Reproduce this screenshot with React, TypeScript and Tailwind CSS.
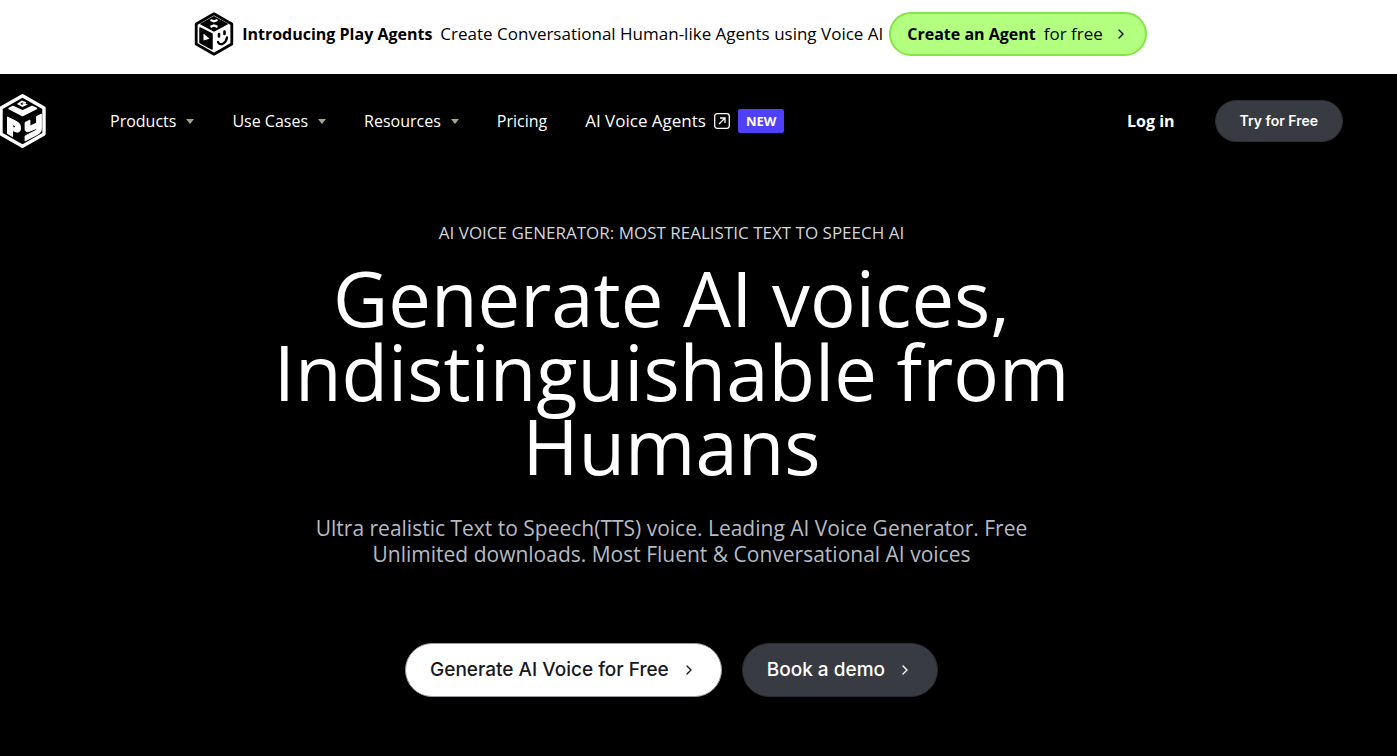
import React from "react";
import { ChevronRight } from "lucide-react";

const sans = "font-['Open_Sans','Noto_Sans',sans-serif]";

function AgentsLogo() {
  return (
    <svg viewBox="0 0 40 44" className="h-11 w-10 shrink-0" aria-hidden="true">
      <path d="M20 1.8 37.8 12v20L20 42.2 2.2 32V12Z" fill="#fff" stroke="#000" strokeWidth="2.8" strokeLinejoin="round" />
      <path d="M20 4.5 33.5 12 20 19.2 6.5 12Z" fill="#000" stroke="#000" strokeLinejoin="round" />
      <path d="M6 16 18 22V37L6 30.500Z" fill="#000" stroke="#000" strokeWidth="1.500" strokeLinejoin="round" />
      <path d="M9.500 21.500 15.500 26.800 9.500 28.500Z" fill="#fff" />
      <path d="M16.500 8 20 9.300 23.500 8M16.500 14.800 20 13.500 23.500 14.800" fill="none" stroke="#fff" strokeWidth="2.300" />
      <path d="M25 22v2.500M30.500 19.500v2.500" stroke="#000" strokeWidth="2.600" strokeLinecap="round" />
      <path d="M24 30c2 4.500 8 1.500 9-4.500" fill="none" stroke="#000" strokeWidth="2.300" strokeLinecap="round" />
    </svg>
  );
}

function PlayLogo() {
  return (
    <svg viewBox="0 0 46 54" className="h-[54px] w-[46px] shrink-0" aria-hidden="true">
      <path d="M22.5 1.8 44 14v26L22.5 52.2 1 40V14Z" fill="#000" stroke="#fff" strokeWidth="3.4" strokeLinejoin="round" />
      <path d="M9 14.500 13 12.500l9.500 4.500 9.500-4.500 4.500 2L22.500 21.500Z" fill="#fff" stroke="#fff" strokeWidth="1.500" strokeLinejoin="round" />
      <path d="M26 9 22 7.500 18.500 10 22.500 12 25.500 10.700 22.500 9.800" fill="none" stroke="#fff" strokeWidth="1.600" />
      <path d="M7.500 23 17.500 28Q20.500 29.800 20.500 33.500 20.500 39 16.500 38L12.500 36.500V42.500L7.500 39.500ZM12.500 30.500V32.800L15.500 34.200V32Z" fill="#fff" fillRule="evenodd" stroke="#fff" strokeLinejoin="round" />
      <path d="M25 28.500 30 26V32L36.500 29V22.500L41.500 20V34.500Q41.500 38 38.500 40L25 47V42L36.500 36V34.500L29 37.500Q25 38.500 25 35Z" fill="#fff" stroke="#fff" strokeWidth="0.800" strokeLinejoin="round" />
    </svg>
  );
}

function Caret() {
  return (
    <svg viewBox="0 0 8 5" className="h-[5px] w-2" aria-hidden="true">
      <path d="M0 0h8L4 5Z" fill="#a5a58d" />
    </svg>
  );
}

function ExternalIcon() {
  return (
    <svg viewBox="0 0 16 16" className="size-4" fill="none" stroke="#fff" aria-hidden="true">
      <rect x="0.700" y="0.700" width="14.600" height="14.600" rx="2.500" strokeWidth="1.300" />
      <path d="m5 11 5.500-5.500M6 5h5v5" strokeWidth="1.300" />
    </svg>
  );
}

export default function App() {
  return (
    <div className={`min-h-screen bg-black text-white ${sans}`}>
      <aside className="bg-white pr-14 text-black">
        <div className="flex items-center justify-center pt-3 pb-[18px]">
          <AgentsLogo />
          <strong className="ml-2 text-base font-bold">Introducing Play Agents</strong>
          <span className="ml-2 text-[17px] leading-6">Create Conversational Human-like Agents using Voice AI</span>
          <a href="#agent" className="ml-1.5 flex h-11 items-center rounded-full border-2 border-[#82e645] bg-[#b3ff80] px-4 text-base">
            <strong className="font-bold">Create an Agent</strong>
            <span className="ml-2 text-[17px] leading-6">for free</span>
            <ChevronRight className="ml-2.5 size-4" strokeWidth={2} />
          </a>
        </div>
      </aside>
      <div className="pr-[54px]">
        <header className="flex items-center pt-5">
          <a href="#home" aria-label="Play home"><PlayLogo /></a>
          <nav className="ml-16 flex items-center gap-[38px] text-base" aria-label="Main">
            <button className="flex items-center gap-2.5">Products <Caret /></button>
            <button className="flex items-center gap-2.5">Use Cases <Caret /></button>
            <button className="flex items-center gap-2.5">Resources <Caret /></button>
            <a href="#pricing">Pricing</a>
            <a href="#agents" className="flex items-center gap-2 text-[17px] leading-6">
              AI Voice Agents <ExternalIcon />
              <span className="rounded-xs bg-[#4f40fa] px-2 text-[13px] leading-6 font-bold">NEW</span>
            </a>
          </nav>
          <div className="ml-auto flex items-center gap-10">
            <a href="#login" className="text-base font-bold">Log in</a>
            <a href="#try" className="flex h-[42px] items-center rounded-full border border-[#2b2c35] bg-[#393b42] px-6 font-['Inter',sans-serif] text-sm font-semibold">Try for Free</a>
          </div>
        </header>
        <main className="flex flex-col items-center pt-[73px] text-center">
          <p className="text-[17px] leading-6 text-[#d4d6dc]">AI VOICE GENERATOR: MOST REALISTIC TEXT TO SPEECH AI</p>
          <h1 className="mt-4 text-[76px] leading-[74px] font-[450]">
            Generate AI voices,<br />Indistinguishable from<br />Humans
          </h1>
          <p className="mt-8 text-[21px] leading-[26px] text-[#b6bac6]">
            Ultra realistic Text to Speech(TTS) voice. Leading AI Voice Generator. Free<br />
            Unlimited downloads. Most Fluent &amp; Conversational AI voices
          </p>
          <div className="mt-[76px] flex gap-5 font-['Inter',sans-serif] text-[19px] font-medium">
            <a href="#generate" className="flex h-[54px] items-center gap-3 rounded-full border border-[#9a9ba0] bg-white px-6 text-[#171923]">
              Generate AI Voice for Free <ChevronRight className="size-4" />
            </a>
            <a href="#demo" className="flex h-[54px] items-center gap-3 rounded-full border border-[#2b2c35] bg-[#393b42] px-6">
              Book a demo <ChevronRight className="size-4" />
            </a>
          </div>
        </main>
      </div>
    </div>
  );
}
